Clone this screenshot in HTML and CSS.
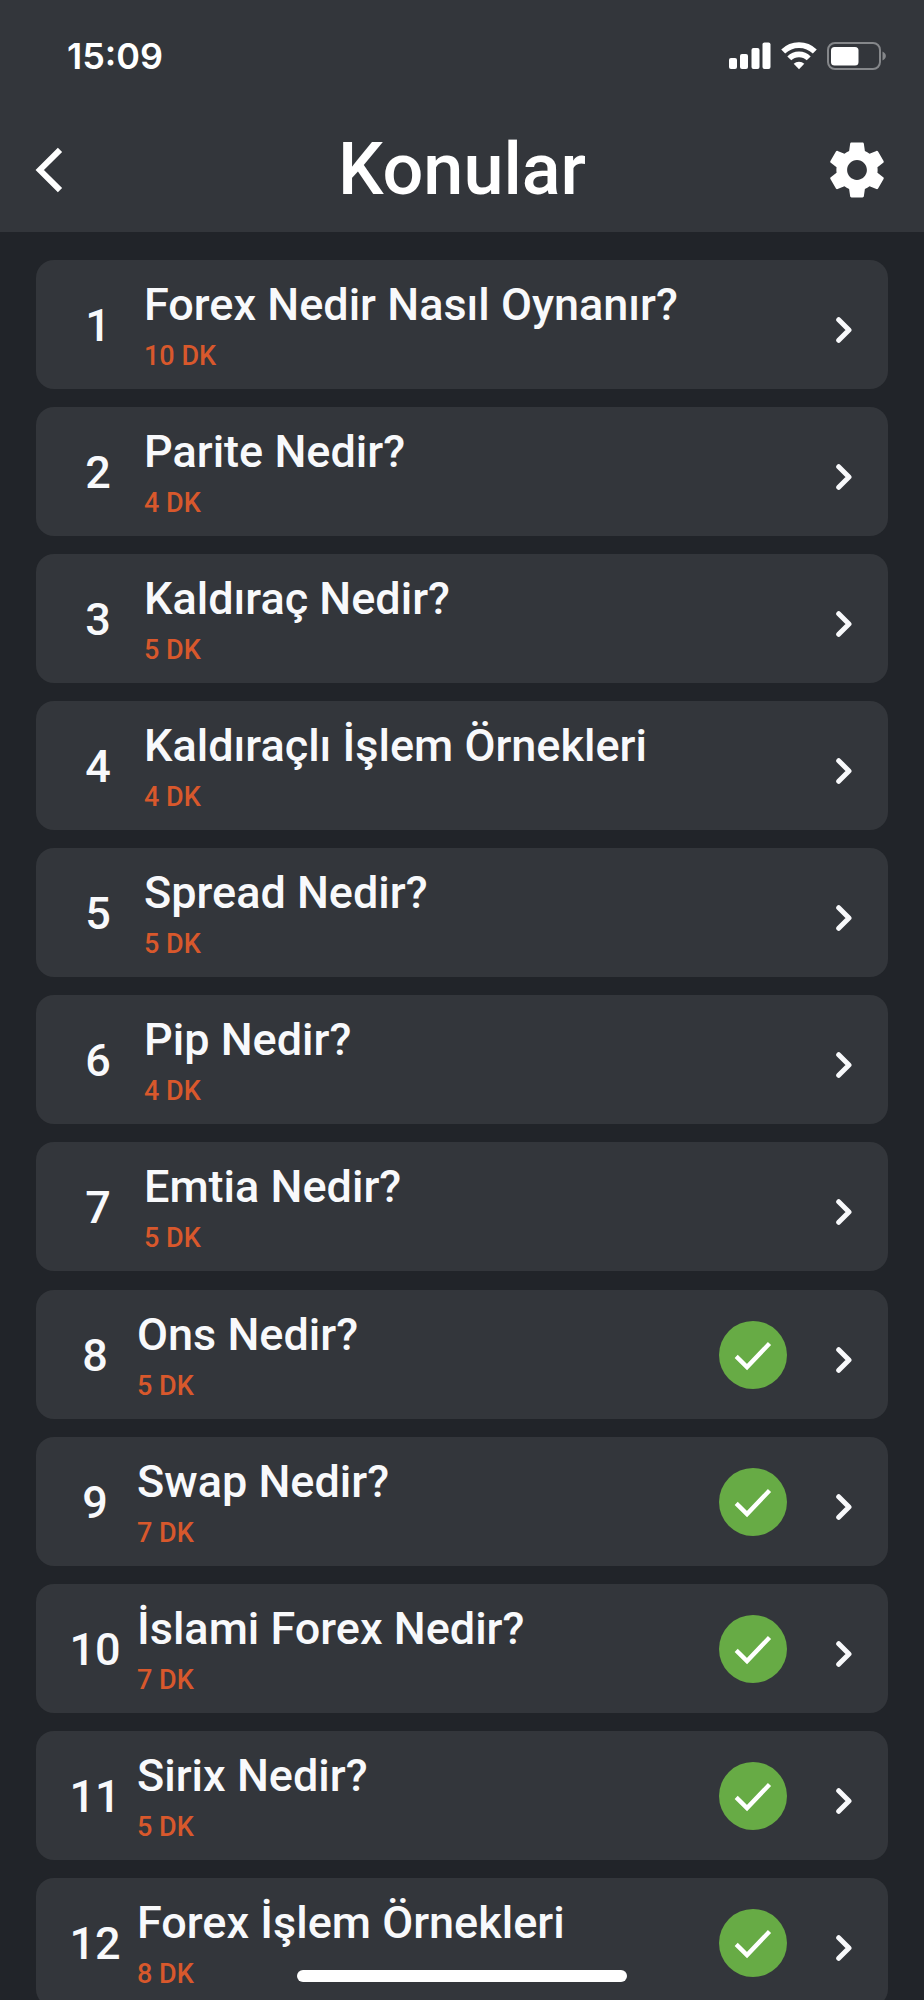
FILE: index.html
```html
<!DOCTYPE html>
<html lang="tr">
<head>
    <meta charset="UTF-8">
    <meta name="viewport" content="width=device-width, initial-scale=1.0">
    <title>Konular</title>
    <link rel="stylesheet" href="styles.css">
</head>
<body>
    <!-- Shared icons -->
    <svg class="sprite" aria-hidden="true">
        <symbol id="chevron" viewBox="0 0 16 26">
            <path d="M2.7 2.7L13 13L2.7 23.3" fill="none" stroke="currentColor" stroke-width="5" stroke-linecap="round" stroke-linejoin="round"/>
        </symbol>
        <symbol id="check" viewBox="0 0 68 68">
            <path d="M17.2 35.4L28 46L50.5 22.5" fill="none" stroke="currentColor" stroke-width="4.4"/>
        </symbol>
    </svg>

    <header class="header">
        <div class="status-bar">
            <span class="time">15:09</span>
            <div class="status-icons">
                <svg width="42" height="28" viewBox="0 0 42 28" fill="#fff">
                    <rect x="0" y="16" width="8" height="11" rx="2"/>
                    <rect x="11" y="12" width="8" height="15" rx="2"/>
                    <rect x="22.5" y="6" width="8" height="21" rx="2"/>
                    <rect x="33.5" y="0.5" width="8" height="26.5" rx="2"/>
                </svg>
                <svg width="36" height="28" viewBox="0 0 36 28">
                    <g fill="none" stroke="#fff" stroke-width="5.6">
                        <path d="M2.2 9.6A22.5 22.5 0 0 1 33.8 9.6"/>
                        <path d="M8.3 16.4A13.6 13.6 0 0 1 27.7 16.4"/>
                    </g>
                    <path d="M18 27.3L12.7 21.8A7.6 7.6 0 0 1 23.3 21.8Z" fill="#fff"/>
                </svg>
                <svg width="60" height="28" viewBox="0 0 60 28">
                    <rect x="1" y="1" width="52" height="26" rx="7" fill="none" stroke="#85878a" stroke-width="2"/>
                    <rect x="4" y="5" width="27.5" height="18.5" rx="3.5" fill="#fff"/>
                    <path d="M55.5 9.5C60 11.5 60 16.5 55.5 18.5Z" fill="#85878a"/>
                </svg>
            </div>
        </div>
        <div class="title-bar">
            <button class="icon-button" aria-label="Geri">
                <svg width="30" height="46" viewBox="0 0 30 46">
                    <path d="M26 2.8L5.8 23L26 43.2" fill="none" stroke="#fff" stroke-width="6"/>
                </svg>
            </button>
            <h1>Konular</h1>
            <button class="icon-button settings" aria-label="Ayarlar">
                <svg width="66" height="66" viewBox="0 0 24 24" fill="#fff">
                    <path d="M19.43 12.98c.04-.32.07-.64.07-.98s-.03-.66-.07-.98l2.11-1.65c.19-.15.24-.42.12-.64l-2-3.46c-.12-.22-.39-.3-.61-.22l-2.49 1c-.52-.4-1.08-.73-1.69-.98l-.38-2.65C14.46 2.18 14.25 2 14 2h-4c-.25 0-.46.18-.49.42l-.38 2.65c-.61.25-1.17.59-1.69.98l-2.49-1c-.23-.09-.49 0-.61.22l-2 3.46c-.13.22-.07.49.12.64l2.11 1.65c-.04.32-.07.65-.07.98s.03.66.07.98l-2.11 1.65c-.19.15-.24.42-.12.64l2 3.46c.12.22.39.3.61.22l2.49-1c.52.4 1.08.73 1.69.98l.38 2.65c.03.24.24.42.49.42h4c.25 0 .46-.18.49-.42l.38-2.65c.61-.25 1.17-.59 1.69-.98l2.49 1c.23.09.49 0 .61-.22l2-3.46c.12-.22.07-.49-.12-.64l-2.11-1.65zM12 15.6c-1.98 0-3.6-1.62-3.6-3.6s1.62-3.6 3.6-3.6 3.6 1.62 3.6 3.6-1.62 3.6-3.6 3.6z"/>
                </svg>
            </button>
        </div>
    </header>

    <main>
        <ul class="topics">
            <li>
                <a class="topic" href="#">
                    <span class="number">1</span>
                    <div class="info">
                        <h2>Forex Nedir Nasıl Oynanır?</h2>
                        <p>10 DK</p>
                    </div>
                    <svg class="chevron"><use href="#chevron"/></svg>
                </a>
            </li>
            <li>
                <a class="topic" href="#">
                    <span class="number">2</span>
                    <div class="info">
                        <h2>Parite Nedir?</h2>
                        <p>4 DK</p>
                    </div>
                    <svg class="chevron"><use href="#chevron"/></svg>
                </a>
            </li>
            <li>
                <a class="topic" href="#">
                    <span class="number">3</span>
                    <div class="info">
                        <h2>Kaldıraç Nedir?</h2>
                        <p>5 DK</p>
                    </div>
                    <svg class="chevron"><use href="#chevron"/></svg>
                </a>
            </li>
            <li>
                <a class="topic" href="#">
                    <span class="number">4</span>
                    <div class="info">
                        <h2>Kaldıraçlı İşlem Örnekleri</h2>
                        <p>4 DK</p>
                    </div>
                    <svg class="chevron"><use href="#chevron"/></svg>
                </a>
            </li>
            <li>
                <a class="topic" href="#">
                    <span class="number">5</span>
                    <div class="info">
                        <h2>Spread Nedir?</h2>
                        <p>5 DK</p>
                    </div>
                    <svg class="chevron"><use href="#chevron"/></svg>
                </a>
            </li>
            <li>
                <a class="topic" href="#">
                    <span class="number">6</span>
                    <div class="info">
                        <h2>Pip Nedir?</h2>
                        <p>4 DK</p>
                    </div>
                    <svg class="chevron"><use href="#chevron"/></svg>
                </a>
            </li>
            <li>
                <a class="topic" href="#">
                    <span class="number">7</span>
                    <div class="info">
                        <h2>Emtia Nedir?</h2>
                        <p>5 DK</p>
                    </div>
                    <svg class="chevron"><use href="#chevron"/></svg>
                </a>
            </li>
        </ul>

        <!-- Completed topics -->
        <ul class="topics completed">
            <li>
                <a class="topic" href="#">
                    <span class="number">8</span>
                    <div class="info">
                        <h2>Ons Nedir?</h2>
                        <p>5 DK</p>
                    </div>
                    <svg class="check"><use href="#check"/></svg>
                    <svg class="chevron"><use href="#chevron"/></svg>
                </a>
            </li>
            <li>
                <a class="topic" href="#">
                    <span class="number">9</span>
                    <div class="info">
                        <h2>Swap Nedir?</h2>
                        <p>7 DK</p>
                    </div>
                    <svg class="check"><use href="#check"/></svg>
                    <svg class="chevron"><use href="#chevron"/></svg>
                </a>
            </li>
            <li>
                <a class="topic" href="#">
                    <span class="number">10</span>
                    <div class="info">
                        <h2>İslami Forex Nedir?</h2>
                        <p>7 DK</p>
                    </div>
                    <svg class="check"><use href="#check"/></svg>
                    <svg class="chevron"><use href="#chevron"/></svg>
                </a>
            </li>
            <li>
                <a class="topic" href="#">
                    <span class="number">11</span>
                    <div class="info">
                        <h2>Sirix Nedir?</h2>
                        <p>5 DK</p>
                    </div>
                    <svg class="check"><use href="#check"/></svg>
                    <svg class="chevron"><use href="#chevron"/></svg>
                </a>
            </li>
            <li>
                <a class="topic" href="#">
                    <span class="number">12</span>
                    <div class="info">
                        <h2>Forex İşlem Örnekleri</h2>
                        <p>8 DK</p>
                    </div>
                    <svg class="check"><use href="#check"/></svg>
                    <svg class="chevron"><use href="#chevron"/></svg>
                </a>
            </li>
        </ul>
    </main>

    <div class="home-indicator"></div>
</body>
</html>
```
FILE: styles.css
```css
* {
    box-sizing: border-box;
}
html {
    scrollbar-width: none;
}
body {
    margin: 0;
    background-color: #212429;
    color: #f8f9fb;
    font-family: Roboto, "Liberation Sans", sans-serif;
    font-weight: 500;
}
h1, h2, p, ul {
    margin: 0;
    padding: 0;
    font-weight: 500;
}
svg {
    display: block;
    flex: none;
}
.sprite {
    position: absolute;
    width: 0;
    height: 0;
}

/* Header */
.header {
    padding-bottom: 4px;
    background-color: #33363b;
    color: #fff;
}
.status-bar {
    display: flex;
    justify-content: space-between;
    align-items: center;
    height: 112px;
    padding: 0 37px 0 67px;
}
.time {
    font-family: Inter, "Liberation Sans", sans-serif;
    font-size: 36px;
    font-weight: 600;
}
.status-icons {
    display: flex;
    align-items: center;
    gap: 10px;
}
.title-bar {
    display: grid;
    grid-template-columns: 1fr auto 1fr;
    align-items: center;
    height: 116px;
    padding: 0 34px;
}
.title-bar h1 {
    font-size: 72px;
    line-height: 84px;
}
.icon-button {
    justify-self: start;
    padding: 0;
    border: none;
    background: none;
    cursor: pointer;
}
.settings {
    justify-self: end;
}

/* Topic list */
main {
    display: flex;
    flex-direction: column;
    gap: 19px;
    padding: 28px 36px;
}
.topics {
    display: flex;
    flex-direction: column;
    gap: 18px;
    list-style: none;
}
.topic {
    display: flex;
    align-items: center;
    padding: 18px 36px;
    border-radius: 18px;
    background-color: #33363b;
    color: inherit;
    text-decoration: none;
}
.number {
    width: 52px;
    margin-right: 20px;
    padding-top: 3px;
    font-size: 45px;
    line-height: 54px;
    text-align: center;
}
.info {
    flex: 1;
}
.info h2 {
    font-size: 45px;
    line-height: 54px;
}
.info p {
    margin-top: 9px;
    color: #d8582c;
    font-size: 27px;
    line-height: 30px;
}
.chevron {
    width: 16px;
    height: 26px;
    margin-top: 10px;
}
.check {
    width: 68px;
    height: 68px;
    margin-right: 49px;
    border-radius: 50%;
    background-color: #67ab45;
    color: #fff;
}
.completed .topic {
    padding-left: 33px;
}
.completed .number {
    margin-right: 16px;
}

.home-indicator {
    position: fixed;
    bottom: 18px;
    left: 50%;
    width: 330px;
    height: 12px;
    border-radius: 6px;
    background-color: #fff;
    transform: translateX(-50%);
}
```
